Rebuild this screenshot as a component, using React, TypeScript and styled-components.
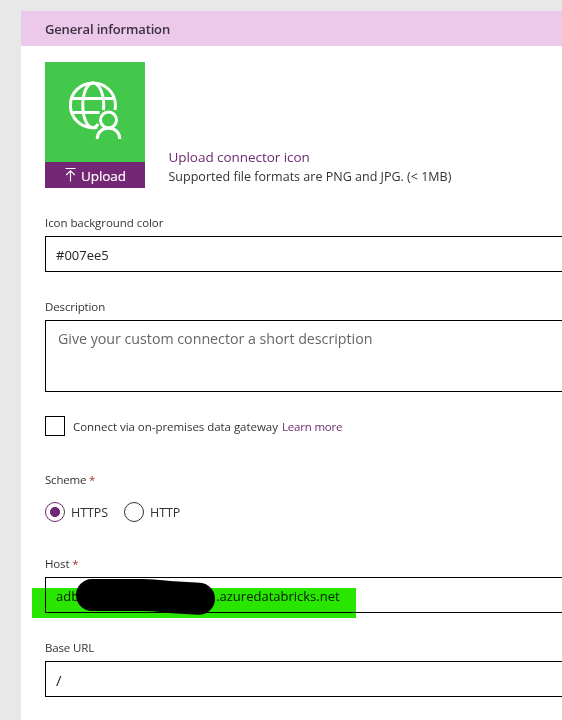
import React from "react";
import styled, { createGlobalStyle } from "styled-components";

const GlobalStyle = createGlobalStyle`
  * { box-sizing: border-box; }
  body {
    margin: 0;
    background: #e8e8e8;
    overflow: hidden;
    font-family: "Open Sans", "Noto Sans", sans-serif;
    color: #333;
  }
`;

const Page = styled.div`
  height: 720px;
  padding: 11px 0 0 21px;
  overflow: hidden;
`;

const Panel = styled.main`
  height: 100%;
  background: #fff;
`;

const PanelHeader = styled.h1`
  display: flex;
  align-items: center;
  height: 35px;
  margin: 0;
  padding: 0 24px;
  background: #ecc8eb;
  color: #3c303f;
  font-size: 13px;
  font-weight: 600;
  letter-spacing: -0.15px;
`;

const Form = styled.form`
  display: flex;
  flex-direction: column;
  padding: 16px 0 0 24px;
`;

const IconRow = styled.section`
  display: flex;
  align-items: flex-end;
  gap: 23.5px;
  height: 126px;
`;

const IconTile = styled.div`
  width: 100px;
  height: 126px;
  background: #43c84b;
`;

const TileArt = styled.svg`
  display: block;
  width: 100px;
  height: 100px;
`;

const UploadButton = styled.button`
  display: flex;
  align-items: center;
  justify-content: flex-start;
  gap: 5px;
  width: 100px;
  height: 26px;
  padding: 0 0 0 20px;
  border: 0;
  background: #742774;
  color: #fff;
  font-family: inherit;
  font-size: 13.5px;
  line-height: 26px;
  letter-spacing: -0.1px;
  svg { margin-bottom: 2px; }
  span { padding-top: 2px; -webkit-text-stroke: 0.15px #fff; }
`;

const IconCopy = styled.div`
  display: flex;
  flex-direction: column;
  font-size: 12.5px;
  line-height: 19px;
  letter-spacing: 0.01px;
  white-space: nowrap;
  padding-bottom: 2px;
`;

const Link = styled.a<{ $large?: boolean }>`
  color: #6b2a70;
  font-size: ${(p) => (p.$large ? "13.5px" : "11.5px")};
  letter-spacing: ${(p) => (p.$large ? "-0.05px" : "-0.2px")};
`;

const Field = styled.div<{ $gap: number }>`
  display: flex;
  flex-direction: column;
  margin-top: ${(p) => p.$gap}px;
`;

const Label = styled.label<{ $tracking?: number }>`
  height: 20px;
  margin-bottom: 3px;
  font-size: 11.5px;
  line-height: 20px;
  letter-spacing: ${(p) => p.$tracking ?? -0.06}px;
`;

const Required = styled.span`
  color: #a4373a;
`;

const Box = styled.div<{ $multiline?: boolean }>`
  display: flex;
  align-items: ${(p) => (p.$multiline ? "flex-start" : "center")};
  width: 600px;
  height: ${(p) => (p.$multiline ? 72 : 36)}px;
  padding: ${(p) => (p.$multiline ? "7px 12px" : "2px 10px 0")};
  border: 1px solid #000;
  color: ${(p) => (p.$multiline ? "#666" : "#222")};
  font-size: ${(p) => (p.$multiline ? "14.25px" : "13px")};
  letter-spacing: ${(p) => (p.$multiline ? "-0.02px" : "0")};
  line-height: 22px;
  white-space: nowrap;
`;

const PathText = styled.span`
  font-size: 15px;
`;

const GatewayRow = styled.div`
  display: flex;
  align-items: center;
  height: 20px;
  margin-top: 24px;
  font-size: 11.5px;
  letter-spacing: -0.04px;
  white-space: nowrap;
`;

const Checkbox = styled.span`
  width: 20px;
  height: 20px;
  margin-right: 8px;
  border: 1px solid #000;
`;

const GatewayText = styled.span`
  width: 209px;
  padding-top: 1px;
  & + a { padding-top: 1px; }
`;

const Radios = styled.div`
  display: flex;
  gap: 16px;
  height: 20px;
  margin-top: 9px;
`;

const RadioOption = styled.label`
  display: flex;
  align-items: center;
  gap: 6px;
  font-size: 12.5px;
  line-height: 20px;
  letter-spacing: -0.06px;
  span { padding-top: 1px; }
`;

const RadioMark = styled.i<{ $on?: boolean }>`
  width: 20px;
  height: 20px;
  border: 1px solid ${(p) => (p.$on ? "#742774" : "#333")};
  border-radius: 50%;
  background: ${(p) => (p.$on ? "radial-gradient(circle, #742774 4.7px, transparent 5.3px)" : "none")};
`;

const HostArea = styled.div`
  position: relative;
`;

const HostName = styled.span`
  display: flex;
  gap: 137px;
`;

const Highlight = styled.div`
  position: absolute;
  left: -13px;
  top: 11px;
  width: 324px;
  height: 30px;
  background: #28e600;
  mix-blend-mode: multiply;
`;

const Redaction = styled.svg`
  position: absolute;
  left: 30px;
  top: 0;
  width: 142px;
  height: 40px;
`;

const ConnectorIcon = () => (
  <TileArt viewBox="0 0 100 100" fill="none" stroke="#fff" strokeWidth="3">
    <path d="M52 65.2C50.7 65.5 49.4 65.7 48 65.7C35.4 65.7 25.4 55.8 25.4 43.3S35.4 20.9 48 20.9S70.4 30.9 70.4 43.3C70.4 45 70.2 46.6 69.9 48" />
    <path d="M53 62C51.7 64.5 50 65.7 48 65.7C42.2 65.7 37.8 55.8 37.8 43.3S42.2 20.9 48 20.9S58.7 30.9 58.7 43.3C58.7 45 58.6 46.6 58.4 48" />
    <path d="M28 36.5H68M28 50.5H54.5" />
    <circle cx="63.5" cy="58" r="8" />
    <path d="M52.2 77C52.2 70.3 57 66.1 63.5 66.1S74.8 70.3 74.8 77" />
  </TileArt>
);

const UploadIcon = () => (
  <svg width="11" height="15" viewBox="0 0 11 15" fill="none" stroke="#fff" strokeWidth="1.15">
    <path d="M0.5 1.5H10.5M5.5 14.5V4M1.2 8L5.5 3.7L9.8 8" />
  </svg>
);

export default function App() {
  return (
    <Page>
      <GlobalStyle />
      <Panel>
        <PanelHeader>General information</PanelHeader>
        <Form>
          <IconRow>
            <IconTile>
              <ConnectorIcon />
              <UploadButton type="button">
                <UploadIcon />
                <span>Upload</span>
              </UploadButton>
            </IconTile>
            <IconCopy>
              <Link $large>Upload connector icon</Link>
              <span>Supported file formats are PNG and JPG. (&lt; 1MB)</span>
            </IconCopy>
          </IconRow>
          <Field $gap={25}>
            <Label>Icon background color</Label>
            <Box>#007ee5</Box>
          </Field>
          <Field $gap={25}>
            <Label $tracking={-0.12}>Description</Label>
            <Box $multiline>Give your custom connector a short description</Box>
          </Field>
          <GatewayRow>
            <Checkbox />
            <GatewayText>Connect via on-premises data gateway</GatewayText>
            <Link>Learn more</Link>
          </GatewayRow>
          <Field $gap={34}>
            <Label $tracking={-0.2}>
              Scheme <Required>*</Required>
            </Label>
            <Radios>
              <RadioOption>
                <RadioMark $on />
                <span>HTTPS</span>
              </RadioOption>
              <RadioOption>
                <RadioMark />
                <span>HTTP</span>
              </RadioOption>
            </Radios>
          </Field>
          <Field $gap={32}>
            <Label $tracking={-0.15}>
              Host <Required>*</Required>
            </Label>
            <HostArea>
              <Box>
                <HostName>
                  <span>adb</span>
                  <span>.azuredatabricks.net</span>
                </HostName>
              </Box>
              <Highlight />
              <Redaction viewBox="0 0 142 40" fill="none" stroke="#000" strokeLinecap="round">
                <path d="M17 18H68C82 18.2 88 19.5 98 20.2L124 21.7" strokeWidth="32" />
              </Redaction>
            </HostArea>
          </Field>
          <Field $gap={25}>
            <Label $tracking={-0.15}>Base URL</Label>
            <Box>
              <PathText>/</PathText>
            </Box>
          </Field>
        </Form>
      </Panel>
    </Page>
  );
}
